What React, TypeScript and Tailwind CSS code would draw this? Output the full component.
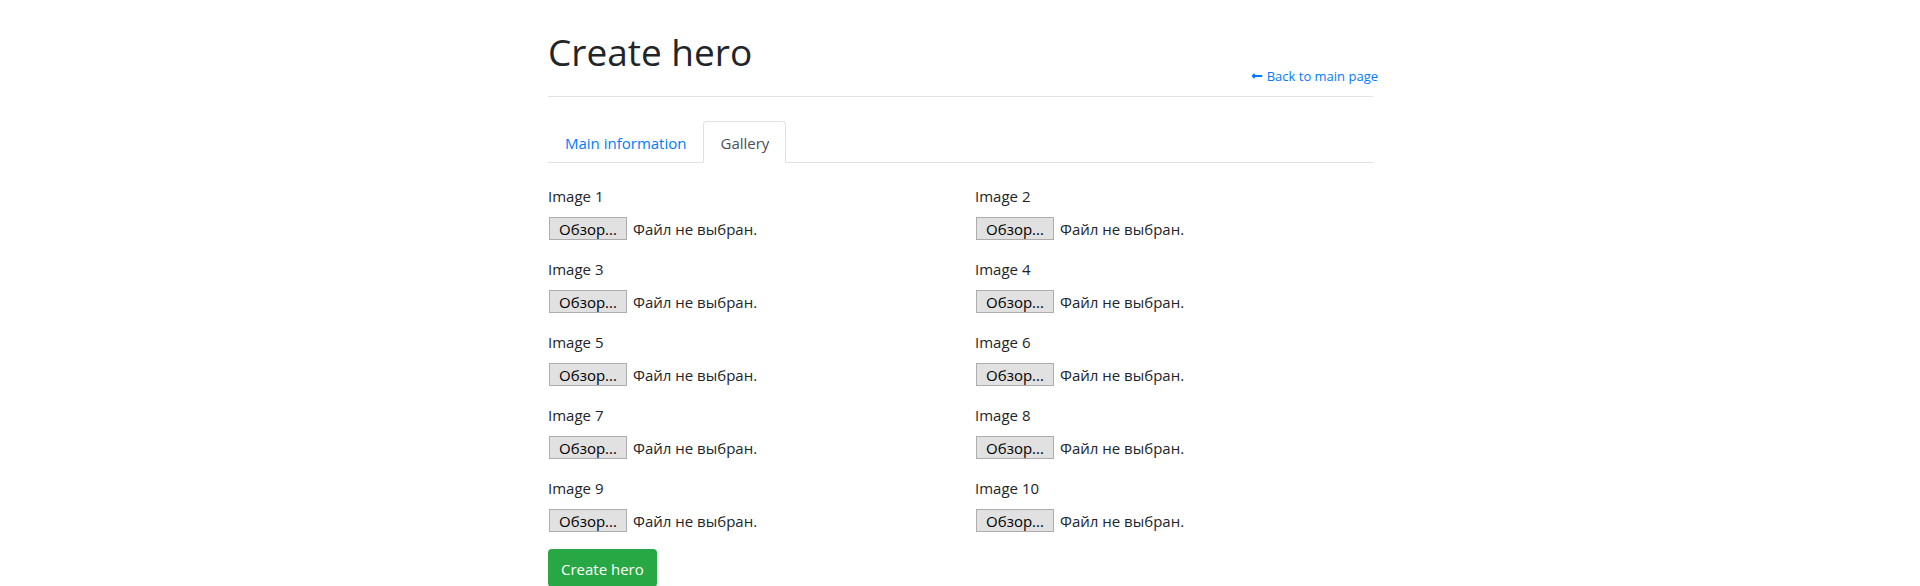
import { useState } from "react";
import { FaLongArrowAltLeft } from "react-icons/fa";

function ImageField({ index }: { index: number }) {
  const [fileName, setFileName] = useState("");
  const id = `image-${index}`;
  return (
    <div className="mb-4">
      <label htmlFor={id} className="mb-2 block w-fit leading-6">
        Image {index}
      </label>
      <div className="relative flex w-fit items-center gap-1.5 p-px">
        <span className="flex h-[23px] w-[78px] items-center justify-center border border-[#adadad] bg-[#e1e1e1] leading-5 text-black">
          Обзор...
        </span>
        <span className="leading-5">{fileName || "Файл не выбран."}</span>
        <input
          id={id}
          type="file"
          accept="image/*"
          className="absolute inset-0 w-full opacity-0"
          onChange={(e) => setFileName(e.target.files?.[0]?.name ?? "")}
        />
      </div>
    </div>
  );
}

const images = [1, 2, 3, 4, 5, 6, 7, 8, 9, 10];

export default function App() {
  return (
    <main className="mx-auto max-w-[856px] pt-7 pr-[15px] pl-4 font-['Open_Sans',sans-serif] text-[15px] text-[#212529]">
      <header className="flex items-end justify-between border-b border-[#e2e3e5] pb-2">
        <h1 className="mb-3 text-[37px] leading-12">Create hero</h1>
        <a
          href="#main"
          className="-mr-[5px] flex items-center gap-1 text-[13px] leading-6 text-[#007bff] hover:underline"
        >
          <FaLongArrowAltLeft className="size-3" />
          Back to main page
        </a>
      </header>

      <nav className="mt-6 flex border-b border-[#dee2e6]">
        <a
          href="#info"
          className="-mb-px rounded-t border border-transparent px-4 pt-[9px] pb-[7px] leading-6 text-[#007bff]"
        >
          Main information
        </a>
        <a
          href="#gallery"
          aria-current="page"
          className="-mb-px rounded-t border border-[#dee2e6] border-b-white bg-white px-4 pt-[9px] pb-[7px] leading-6 text-[#495057]"
        >
          Gallery
        </a>
      </nav>

      <form onSubmit={(e) => e.preventDefault()}>
        <div className="mt-[21px] grid grid-cols-2 gap-x-[29px]">
          {images.map((n) => (
            <ImageField key={n} index={n} />
          ))}
        </div>
        <button
          type="submit"
          className="block rounded bg-[#28a745] px-[13px] pt-2 pb-1.5 leading-6 text-white"
        >
          Create hero
        </button>
      </form>
    </main>
  );
}
